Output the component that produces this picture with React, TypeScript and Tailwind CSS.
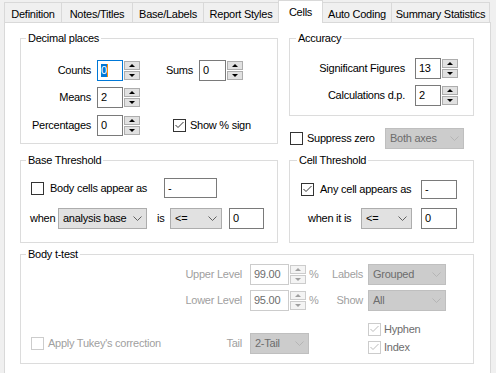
import React from "react";

const tabs = [
  { label: "Definition", w: "w-[57px]" },
  { label: "Notes/Titles", w: "w-[71px]" },
  { label: "Base/Labels", w: "w-[71px]" },
  { label: "Report Styles", w: "w-[75px]" },
  { label: "Cells", w: "w-[45px]", active: true },
  { label: "Auto Coding", w: "w-[68px]", afterActive: true },
  { label: "Summary Statistics", w: "w-[99px]", last: true },
];

function Check({ checked = false, disabled = false, className = "" }: any) {
  return (
    <div className={`h-[13px] w-[13px] shrink-0 border bg-white ${disabled ? "border-[#cccccc]" : "border-[#333333]"} ${className}`}>
      {checked && (
        <svg width="11" height="11" viewBox="0 0 11 11">
          <polyline points="1.5,5 4,7.5 9.5,2" fill="none" stroke={disabled ? "#bcbcbc" : "#333333"} strokeWidth="1" />
        </svg>
      )}
    </div>
  );
}

function TextBox({ value, w, h = "h-full", className = "" }: any) {
  return (
    <div className={`${w} ${h} ${className} flex items-center border border-[#7a7a7a] bg-white pl-[3px]`}>{value}</div>
  );
}

function Arrow({ up, disabled }: any) {
  if (up)
    return <div className={`h-0 w-0 border-x-[3px] border-b-[3px] border-x-transparent ${disabled ? "border-b-[#a0a0a0]" : "border-b-black"}`} />;
  return <div className={`h-0 w-0 border-x-[3px] border-t-[3px] border-x-transparent ${disabled ? "border-t-[#a0a0a0]" : "border-t-black"}`} />;
}

function Spin({ value, w, focused = false, disabled = false, className = "" }: any) {
  const box = focused ? "border-[#0078d7]" : disabled ? "border-[#cccccc] text-[#6d6d6d]" : "border-[#7a7a7a]";
  const btn = disabled ? "border-[#cccccc] bg-[#f4f4f4]" : "border-[#adadad] bg-[#e1e1e1]";
  return (
    <div className={`flex h-[21px] ${className}`}>
      <div className={`${w} flex h-full items-center border bg-white pl-[3px] ${box}`}>
        {focused ? (
          <span className="border-r border-[#ff8c00] bg-[#0078d7] leading-[13px] text-white">{value}</span>
        ) : (
          value
        )}
      </div>
      <div className="flex h-full w-[17px] flex-col gap-px py-px pl-px">
        <div className={`flex flex-1 items-center justify-center border ${btn}`}>
          <Arrow up disabled={disabled} />
        </div>
        <div className={`flex flex-1 items-center justify-center border ${btn}`}>
          <Arrow disabled={disabled} />
        </div>
      </div>
    </div>
  );
}

function Combo({ value, w, disabled = false, className = "" }: any) {
  return (
    <div
      className={`${w} ${className} flex h-[21px] items-center justify-between border pl-[4px] pr-[4px] ${
        disabled ? "border-[#bfbfbf] bg-[#cccccc] text-[#6d6d6d]" : "border-[#adadad] bg-[#e1e1e1]"
      }`}
    >
      <span>{value}</span>
      <svg width="9" height="5" viewBox="0 0 9 5">
        <polyline points="0.5,0.5 4.5,4.5 8.5,0.5" fill="none" stroke={disabled ? "#b5b5b5" : "#606060"} />
      </svg>
    </div>
  );
}

function Group({ title, className = "", titleClass = "ml-[5px]", children }: any) {
  return (
    <div className={`border border-[#dcdcdc] ${className}`}>
      <div className={`-mt-[8px] w-fit bg-white px-[2px] leading-[14px] ${titleClass}`}>{title}</div>
      {children}
    </div>
  );
}

export default function App() {
  return (
    <div className="h-[373px] w-[496px] overflow-hidden bg-[#f0f0f0] font-['Liberation_Sans',Arial,sans-serif] text-[11px] tracking-[-0.25px] text-black">
      {/* tab strip */}
      <div className="flex h-[22px] items-end pl-[4px]">
        {tabs.map((t) =>
          t.active ? (
            <div
              key={t.label}
              className={`${t.w} relative z-10 -mb-px flex h-[23px] items-center justify-center border border-b-0 border-[#d9d9d9] bg-white`}
            >
              {t.label}
            </div>
          ) : (
            <div
              key={t.label}
              className={`${t.w} flex h-[20px] items-center justify-center border-t border-[#d9d9d9] bg-[#f0f0f0] pt-[3px] ${
                t.afterActive ? "" : "border-l"
              } ${t.last ? "border-r" : ""}`}
            >
              {t.label}
            </div>
          )
        )}
      </div>

      {/* tab page */}
      <div className="ml-[4px] h-[360px] w-[487px] border border-[#d9d9d9] bg-white pl-[15px] pt-[15px]">
        <div className="flex items-start gap-[11px]">
          <Group title="Decimal places" className="h-[106px] w-[258px]">
            <div className="mt-[15px] flex h-[21px] items-center">
              <span className="w-[70px] text-right">Counts</span>
              <Spin className="ml-[6px]" w="w-[26px]" value="0" focused />
              <span className="w-[53px] text-right">Sums</span>
              <Spin className="ml-[6px]" w="w-[27px]" value="0" />
            </div>
            <div className="mt-[6px] flex h-[21px] items-center">
              <span className="w-[70px] text-right">Means</span>
              <Spin className="ml-[6px]" w="w-[26px]" value="2" />
            </div>
            <div className="mt-[7px] flex h-[21px] items-center">
              <span className="w-[70px] text-right">Percentages</span>
              <Spin className="ml-[6px]" w="w-[26px]" value="0" />
              <Check className="ml-[33px]" checked />
              <span className="ml-[4px]">Show % sign</span>
            </div>
          </Group>

          <div className="flex w-[185px] flex-col">
            <Group title="Accuracy" className="h-[78px]" titleClass="ml-[6px]">
              <div className="mt-[13px] flex h-[21px] items-center">
                <span className="w-[115px] text-right">Significant Figures</span>
                <Spin className="ml-[10px]" w="w-[26px]" value="13" />
              </div>
              <div className="mt-[6px] flex h-[21px] items-center">
                <span className="w-[115px] text-right">Calculations d.p.</span>
                <Spin className="ml-[10px]" w="w-[26px]" value="2" />
              </div>
            </Group>
            <div className="mt-[12px] flex h-[21px] items-center">
              <Check className="ml-[1px]" />
              <span className="ml-[4px] w-[78px]">Suppress zero</span>
              <Combo w="w-[79px]" value="Both axes" disabled />
            </div>
          </div>
        </div>

        <div className="mt-[11px] flex gap-[11px]">
          <Group title="Base Threshold" className="h-[83px] w-[258px]">
            <div className="mt-[11px] flex h-[20px] items-center">
              <Check className="ml-[10px]" />
              <span className="ml-[6px] w-[114px]">Body cells appear as</span>
              <TextBox w="w-[53px]" value="-" />
            </div>
            <div className="mt-[10px] flex h-[21px] items-center">
              <span className="ml-[9px] w-[28px]">when</span>
              <Combo w="w-[89px]" value="analysis base" />
              <span className="ml-[10px] w-[13px]">is</span>
              <Combo w="w-[52px]" value="<=" />
              <TextBox className="ml-[7px]" w="w-[35px]" value="0" />
            </div>
          </Group>

          <Group title="Cell Threshold" className="h-[83px] w-[185px]" titleClass="ml-[7px]">
            <div className="mt-[12px] flex h-[20px] items-center">
              <Check className="ml-[11px]" checked />
              <span className="ml-[6px] w-[101px]">Any cell appears as</span>
              <TextBox w="w-[36px]" h="h-[19px]" value="-" />
            </div>
            <div className="mt-[9px] flex h-[21px] items-center">
              <span className="ml-[18px] w-[53px]">when it is</span>
              <Combo w="w-[51px]" value="<=" />
              <TextBox className="ml-[9px]" w="w-[36px]" value="0" />
            </div>
          </Group>
        </div>

        <Group title="Body t-test" className="mt-[11px] h-[110px] w-[454px]">
          <div className="mt-[2px] flex h-[22px] items-center text-[#a0a0a0]">
            <span className="w-[221px] text-right">Upper Level</span>
            <Spin className="ml-[8px]" w="w-[39px]" value="99.00" disabled />
            <span className="w-[10px] pl-[3px]">%</span>
            <span className="w-[47px] text-right">Labels</span>
            <Combo className="ml-[5px]" w="w-[78px]" value="Grouped" disabled />
          </div>
          <div className="mt-[4px] flex h-[22px] items-center text-[#a0a0a0]">
            <span className="w-[221px] text-right">Lower Level</span>
            <Spin className="ml-[8px]" w="w-[39px]" value="95.00" disabled />
            <span className="w-[10px] pl-[3px]">%</span>
            <span className="w-[47px] text-right">Show</span>
            <Combo className="ml-[5px]" w="w-[78px]" value="All" disabled />
          </div>
          <div className="mt-[9px] flex items-end">
            <div className="mb-[2px] flex h-[21px] items-center text-[#a0a0a0]">
              <div className="flex w-[221px] items-center">
                <Check className="ml-[10px]" disabled />
                <span className="ml-[4px]">Apply Tukey's correction</span>
                <span className="ml-auto">Tail</span>
              </div>
              <Combo className="ml-[8px]" w="w-[59px]" value="2-Tail" disabled />
            </div>
            <div className="ml-[59px] flex flex-col text-[#6d6d6d]">
              <div className="flex h-[18px] items-center">
                <Check checked disabled />
                <span className="ml-[3px]">Hyphen</span>
              </div>
              <div className="flex h-[18px] items-center">
                <Check checked disabled />
                <span className="ml-[3px]">Index</span>
              </div>
            </div>
          </div>
        </Group>
      </div>
    </div>
  );
}
